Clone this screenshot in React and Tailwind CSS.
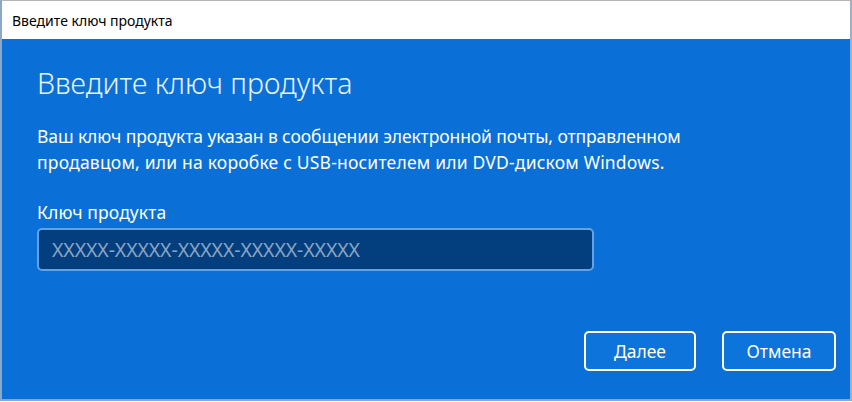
export default function App() {
  return (
    <div className="w-[852px] h-[402px] bg-white font-['Noto_Sans',sans-serif]">
      <div className="flex flex-col h-[401px] w-[852px] border-t border-t-[#b4b4b4] border-l-2 border-l-[#8aa9c9] border-r-2 border-r-[#9ab0c6] border-b-2 border-b-[#8aa9c9]">
        <div className="h-[38px] bg-white flex items-center pl-[10px] text-[14px] text-black">
          Введите ключ продукта
        </div>
        <div className="flex-1 bg-[#0a70d8] flex flex-col pl-[35px] pr-[14px]">
          <h1 className="mt-[26px] text-[28.5px] leading-[36px] font-light text-[#eaf2fb]">
            Введите ключ продукта
          </h1>
          <p className="mt-[22px] text-[17.5px] leading-[26px] text-white tracking-[-0.1px]">
            Ваш ключ продукта указан в сообщении электронной почты, отправленном
            <br />
            <span className="tracking-[0.2px]">продавцом, или на коробке с USB-носителем или DVD-диском Windows.</span>
          </p>
          <label className="mt-[25px] text-[17.5px] leading-[24px] text-white tracking-[0.1px]">
            Ключ продукта
          </label>
          <div className="mt-[4px] w-[557px] h-[43px] rounded-[5px] border-2 border-[#62a3e6] bg-[#033f7e] flex items-center pl-[13px] text-[19.5px] text-[#8ba3c2] tracking-[-0.1px]">
            XXXXX-XXXXX-XXXXX-XXXXX-XXXXX
          </div>
          <div className="mt-auto mb-[28px] flex justify-end gap-[26px]">
            <button className="w-[112px] h-[40px] rounded-[5px] border-2 border-white bg-[#0d74db] text-white text-[17.5px]">
              Далее
            </button>
            <button className="w-[114px] h-[40px] rounded-[5px] border-2 border-white bg-[#0d74db] text-white text-[17.5px]">
              Отмена
            </button>
          </div>
        </div>
      </div>
    </div>
  );
}
